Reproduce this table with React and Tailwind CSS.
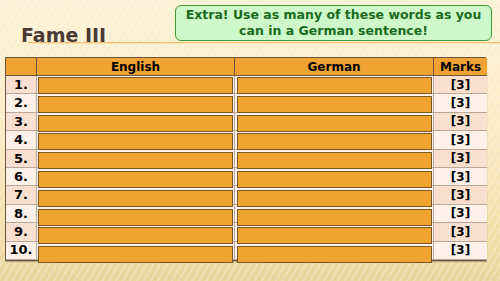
const rows = [1, 2, 3, 4, 5, 6, 7, 8, 9, 10];

export default function App() {
  return (
    <div
      className="relative w-[500px] h-[281px] overflow-hidden bg-[linear-gradient(180deg,#fdf2d6_0%,#fbebc6_45%,#f1dfa8_85%,#ead59a_100%)]"
      style={{ fontFamily: '"DejaVu Sans", Verdana, sans-serif' }}
    >
      {/* diagonal hatching of the slide background */}
      <div className="absolute inset-0 bg-[repeating-linear-gradient(120deg,rgba(255,255,255,0.35)_0px,rgba(255,255,255,0.35)_2px,transparent_2px,transparent_6px)] opacity-60" />

      <div className="relative flex flex-col">
        <div className="absolute left-[28px] right-0 top-[42px] h-[1px] bg-[#f1c06e]" />
        <div className="absolute left-[28px] right-0 top-[43px] h-[1px] bg-[#fbe3b8]" />

        <div className="relative flex h-[57px]">
          <div className="flex flex-col justify-end w-[175px] pl-[21px]">
            <h1 className="text-[19px] leading-[20px] font-bold text-[#4a3a36]">Fame III</h1>
            <div className="h-[12px]" />
          </div>
          <div className="flex flex-col pt-[5px]">
            <div className="w-[317px] h-[36px] rounded-[6px] border-[1.5px] border-[#3f9a3a] bg-[#cdf8c9] flex flex-col items-center justify-center text-[12.5px] leading-[16px] font-bold text-[#1b6b1f]">
              <span>Extra! Use as many of these words as you</span>
              <span>can in a German sentence!</span>
            </div>
          </div>
        </div>

        <div className="relative ml-[5px] w-[481px]">
          <div className="grid grid-cols-[31px_198px_199px_53px] border border-[#6b5642] shadow-[1px_1px_1px_rgba(0,0,0,0.25)]">
            <div className="h-[18px] bg-[#f0a332] border-r border-b border-[#6b5642]" />
            <div className="h-[18px] bg-[#f0a332] border-r border-b border-[#6b5642] flex items-center justify-center text-[12px] font-bold text-black">English</div>
            <div className="h-[18px] bg-[#f0a332] border-r border-b border-[#6b5642] flex items-center justify-center text-[12px] font-bold text-black">German</div>
            <div className="h-[18px] bg-[#f0a332] border-b border-[#6b5642] flex items-center justify-center text-[12px] font-bold text-black">Marks</div>
            {rows.map((n) => {
              const odd = n % 2 === 1;
              const tint = odd ? "bg-[#f9dfcf]" : "bg-[#fdf1e9]";
              return [
                <div key={n + "n"} className={`h-[18.4px] ${tint} border-r border-b border-[#b8a89a] flex items-center justify-center text-[13px] font-bold text-black`}>{n}.</div>,
                <div key={n + "e"} className="h-[18.4px] bg-[#fdf3ec] border-r border-b border-[#b8a89a]" />,
                <div key={n + "g"} className="h-[18.4px] bg-[#fdf3ec] border-r border-b border-[#b8a89a]" />,
                <div key={n + "m"} className={`h-[18.4px] ${tint} border-b border-[#b8a89a] flex items-center justify-center text-[12px] font-bold text-black`}>[3]</div>,
              ];
            })}
          </div>

          {/* orange cover boxes hiding the answers */}
          <div className="absolute left-[33px] top-[20px] flex flex-col gap-[1.8px]">
            {rows.map((n) => (
              <div key={n} className="flex gap-[4px]">
                <div className="w-[195px] h-[17px] bg-[#f0a430] border border-[#7a5626]" />
                <div className="w-[195px] h-[17px] bg-[#f0a430] border border-[#7a5626]" />
              </div>
            ))}
          </div>
        </div>
      </div>
    </div>
  );
}
